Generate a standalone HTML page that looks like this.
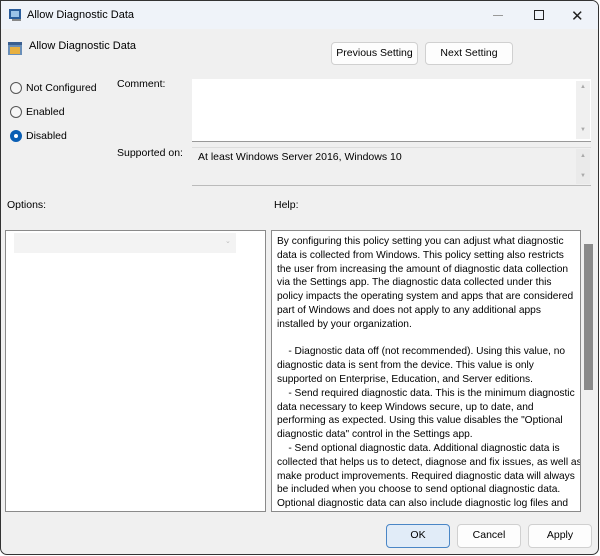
<!DOCTYPE html>
<html><head><meta charset="utf-8"><style>
*{box-sizing:border-box;margin:0;padding:0}
body{width:600px;height:556px;background:#fff;font-family:"Liberation Sans",sans-serif;font-size:10.5px;color:#000;overflow:hidden;position:relative}
.win{position:absolute;left:0;top:0;width:599px;height:555px;border:1px solid #333;border-radius:0 7px 7px 7px;background:#f0f0f0;overflow:hidden}
.tb{position:absolute;left:0;top:0;width:100%;height:28px;background:#eff3f9}
.abs{position:absolute}
.btn{position:absolute;background:#fdfdfd;border:1px solid #d0d0d0;border-radius:4px;text-align:center;line-height:21px;font-size:10.5px}
.radio{position:absolute;width:12px;height:12px;border:1px solid #555;border-radius:50%;background:#f6f6f6}
.help{position:absolute;left:270px;top:229px;width:310px;height:282px;background:#fff;border:1px solid #8a8a8a;padding:4px 0 0 5px;font-size:10.2px;line-height:13.8px;overflow:hidden;white-space:nowrap}
</style></head><body><div class="win">
<div class="tb"></div>
<svg class="abs" style="left:7px;top:7px" width="15" height="14"><rect x="1" y="1" width="12" height="10" fill="#2a5d9c"/><rect x="3" y="3" width="8" height="6" fill="#9cc3e8"/><rect x="4" y="11" width="9" height="2" fill="#888"/></svg>
<div class="abs" style="left:26px;top:8px;font-size:11px">Allow Diagnostic Data</div>
<div class="abs" style="left:492px;top:14px;width:10px;height:1px;background:#999"></div>
<div class="abs" style="left:533px;top:9px;width:10px;height:10px;border:1px solid #222"></div>
<div class="abs" style="left:570px;top:6px;font-size:15px;color:#222">✕</div>
<svg class="abs" style="left:6px;top:40px" width="16" height="15"><rect x="1" y="1" width="14" height="13" fill="#6a8fb8"/><rect x="1" y="1" width="14" height="3" fill="#3a5f90"/><rect x="3" y="6" width="10" height="7" fill="#e8b040"/></svg>
<div class="abs" style="left:28px;top:39px;font-size:11px">Allow Diagnostic Data</div>
<div class="btn" style="left:330px;top:41px;width:87px;height:23px">Previous Setting</div>
<div class="btn" style="left:424px;top:41px;width:88px;height:23px">Next Setting</div>
<div class="radio" style="left:9px;top:81px"></div><div class="abs" style="left:25px;top:81px">Not Configured</div>
<div class="radio" style="left:9px;top:105px"></div><div class="abs" style="left:25px;top:105px">Enabled</div>
<div class="radio" style="left:9px;top:129px;background:#0a5fb4;border-color:#0a5fb4"></div><div class="abs" style="left:13px;top:133px;width:4px;height:4px;border-radius:50%;background:#fff"></div><div class="abs" style="left:25px;top:129px">Disabled</div>
<div class="abs" style="left:116px;top:77px">Comment:</div>
<div class="abs" style="left:116px;top:146px">Supported on:</div>
<div class="abs" style="left:191px;top:78px;width:399px;height:63px;background:#fff;border-bottom:1px solid #999"></div>
<div class="abs" style="left:575px;top:80px;width:14px;height:58px;background:#f0f0f0"></div>
<div class="abs" style="left:579px;top:83px;font-size:6px;color:#aaa">▲</div><div class="abs" style="left:579px;top:126px;font-size:6px;color:#aaa">▼</div>
<div class="abs" style="left:191px;top:146px;width:399px;height:39px;background:#f0f0f0;border-top:1px solid #ddd;border-bottom:1px solid #bbb"></div>
<div class="abs" style="left:197px;top:150px">At least Windows Server 2016, Windows 10</div>
<div class="abs" style="left:575px;top:148px;width:14px;height:35px;background:#eaeaea"></div>
<div class="abs" style="left:579px;top:152px;font-size:6px;color:#aaa">▲</div><div class="abs" style="left:579px;top:172px;font-size:6px;color:#aaa">▼</div>
<div class="abs" style="left:6px;top:198px">Options:</div>
<div class="abs" style="left:273px;top:198px">Help:</div>
<div class="abs" style="left:4px;top:229px;width:261px;height:282px;background:#fff;border:1px solid #8a8a8a"></div>
<div class="abs" style="left:13px;top:232px;width:222px;height:20px;background:#f3f3f3"></div>
<div class="abs" style="left:224px;top:236px;font-size:7px;color:#bbb">⌄</div>
<div class="help">By configuring this policy setting you can adjust what diagnostic<br>data is collected from Windows. This policy setting also restricts<br>the user from increasing the amount of diagnostic data collection<br>via the Settings app. The diagnostic data collected under this<br>policy impacts the operating system and apps that are considered<br>part of Windows and does not apply to any additional apps<br>installed by your organization.<br><br>&nbsp;&nbsp;&nbsp;&nbsp;- Diagnostic data off (not recommended). Using this value, no<br>diagnostic data is sent from the device. This value is only<br>supported on Enterprise, Education, and Server editions.<br>&nbsp;&nbsp;&nbsp;&nbsp;- Send required diagnostic data. This is the minimum diagnostic<br>data necessary to keep Windows secure, up to date, and<br>performing as expected. Using this value disables the "Optional<br>diagnostic data" control in the Settings app.<br>&nbsp;&nbsp;&nbsp;&nbsp;- Send optional diagnostic data. Additional diagnostic data is<br>collected that helps us to detect, diagnose and fix issues, as well as<br>make product improvements. Required diagnostic data will always<br>be included when you choose to send optional diagnostic data.<br>Optional diagnostic data can also include diagnostic log files and</div>
<div class="abs" style="left:580px;top:229px;width:14px;height:282px;background:#f0f0f0"></div>
<div class="abs" style="left:583px;top:243px;width:9px;height:146px;background:#8a8a8a"></div>
<div class="btn" style="left:385px;top:523px;width:64px;height:24px;background:#e1ecf8;border:1px solid #4a86c6">OK</div>
<div class="btn" style="left:456px;top:523px;width:64px;height:24px">Cancel</div>
<div class="btn" style="left:527px;top:523px;width:64px;height:24px">Apply</div>
</div></body></html>
